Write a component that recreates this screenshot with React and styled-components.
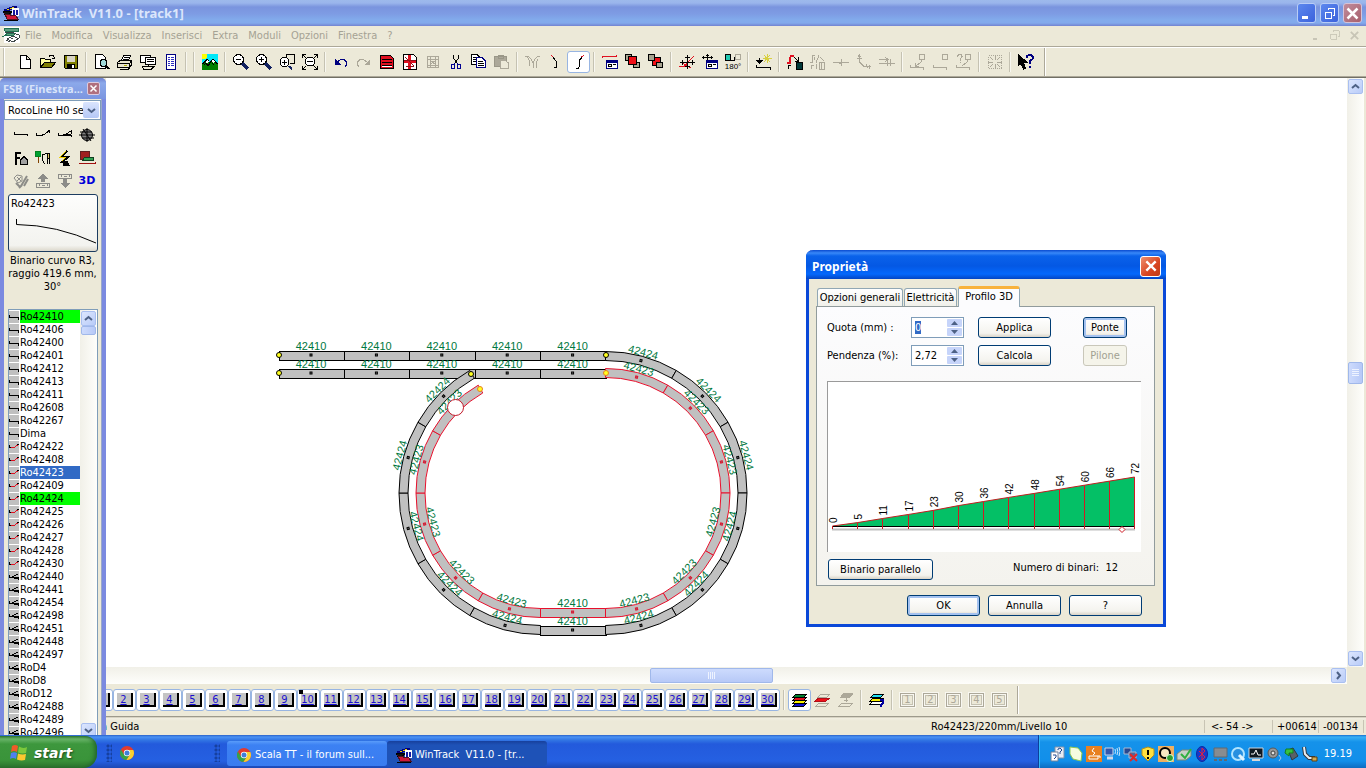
import React, { useEffect, useRef, useState } from 'react';
import styled, { createGlobalStyle } from 'styled-components';

const GlobalStyle = createGlobalStyle`
  * {
    box-sizing: border-box;
  }
  html, body, #root {
    height: 100%;
  }
  body {
    margin: 0;
    overflow: hidden;
    background: #ece9d8;
  }
  body, button, input, select {
    font-family: 'DejaVu Sans Condensed', 'Noto Sans', sans-serif;
    font-size: 11px;
    line-height: 13px;
    color: #000;
  }
  button {
    padding: 0;
    cursor: default;
  }
  svg {
    display: block;
    flex: none;
  }
`;

const AppStyle = styled.div`
  display: flex;
  flex-direction: column;
  height: 100vh;
`;

/* ---- title and menu ---- */
const TitleBar = styled.header`
  display: flex;
  align-items: center;
  height: 26px;
  padding: 0 4px 0 3px;
  gap: 3px;
  background: linear-gradient(#9db9eb 0, #9ab5ec 3px, #7a94de 7px, #7e9ce4 14px, #82abec 20px, #82a9ec 23px, #7283d0 26px);
`;
const TitleText = styled.h1`
  flex: 1;
  margin: 0;
  font-family: 'Noto Sans', 'Open Sans', sans-serif;
  font-size: 13px;
  font-weight: 700;
  white-space: pre;
  color: #dbe6fb;
`;
const WindowButtons = styled.div`
  display: flex;
  gap: 4px;
`;
const WindowButton = styled.button`
  display: grid;
  place-items: center;
  width: 19px;
  height: 20px;
  border: 1px solid ${(props) => (props.$close ? '#d5c3d8' : '#b9cdf6')};
  border-radius: 3px;
  background: ${(props) => (props.$close ? 'linear-gradient(135deg, #c08c9c, #a8606c)' : 'linear-gradient(135deg, #5c88ee, #3c62dc)')};
`;
const MenuBar = styled.nav`
  display: flex;
  align-items: center;
  height: 20px;
  padding: 0 4px 2px;
  background: #ece9d8;
`;
const MenuList = styled.div`
  display: flex;
  flex: 1;
  gap: 10px;
  padding-left: 5px;
`;
const MenuItem = styled.button`
  border: 0;
  background: none;
  color: #a5a294;
`;
const MdiButtons = styled.div`
  display: flex;
  gap: 3px;
`;
const MdiButton = styled.button`
  display: grid;
  place-items: center;
  width: 16px;
  height: 14px;
  border: 0;
  background: none;
`;

/* ---- toolbars ---- */
const ToolBar = styled.div`
  display: flex;
  align-items: center;
  height: 32px;
  border-top: 1px solid #aca899;
  border-bottom: 1px solid #716f64;
  box-shadow: inset 0 1px 0 #fff, inset 0 -1px 0 #aca899;
  background: #ece9d8;
`;
const ToolGroup = styled.div`
  display: flex;
  align-items: center;
  height: 28px;
  padding: 0 7px 0 8px;
  margin-left: 4px;
  border-left: 1px solid #fff;
  border-right: 1px solid #aca899;
  box-shadow: 1px 0 0 #fff, -1px 0 0 #c5c2b2;
`;
const ToolButton = styled.button`
  display: grid;
  place-items: center;
  width: 23px;
  height: 22px;
  border: 1px solid ${(props) => (props.$pressed ? '#98b5e2' : 'transparent')};
  border-radius: 3px;
  background: ${(props) => (props.$pressed ? '#fff' : 'none')};
`;
const Separator = styled.span`
  width: 8px;
  height: 20px;
  border-left: 3px solid transparent;
  background: linear-gradient(90deg, #c5c2b2 1px, #f8f7f0 1px, #f8f7f0 2px, transparent 2px) content-box;
`;

/* ---- palette on the left ---- */
const Body = styled.div`
  display: flex;
  flex: 1;
  min-height: 0;
`;
const Palette = styled.aside`
  display: flex;
  flex-direction: column;
  width: 106px;
  overflow: hidden;
  padding: 0 4px;
  border-radius: 5px 5px 0 0;
  background: #7b8ae0;
`;
const PaletteTitle = styled.div`
  display: flex;
  align-items: center;
  justify-content: space-between;
  height: 21px;
  margin: 0 -4px;
  padding: 0 6px 0 3px;
  font-family: 'Noto Sans', 'Open Sans', sans-serif;
  font-weight: 700;
  color: #d9e4fa;
  background: linear-gradient(#6f80d0, #8ca9ea 5px, #7b95e0);
`;
const PaletteClose = styled.button`
  display: grid;
  place-items: center;
  width: 13px;
  height: 13px;
  border: 1px solid #dccbe0;
  border-radius: 2px;
  background: #b0707e;
`;
const PaletteBody = styled.div`
  display: flex;
  flex-direction: column;
  flex: 1;
  min-height: 0;
  padding: 1px 0 0;
  background: #ece9d8;
  border-right: 1px solid #9aa8c8;
`;
const Combo = styled.label`
  display: flex;
  height: 20px;
  padding: 1px;
  border: 1px solid #7f9db9;
  background: #fff;
`;
const ComboSelect = styled.select`
  appearance: none;
  flex: 1;
  width: 0;
  padding: 0 0 0 2px;
  border: 0;
  border-radius: 0;
  background: #fff;
  overflow: hidden;
  outline: none;
`;
const ComboArrow = styled.span`
  display: grid;
  place-items: center;
  width: 16px;
  border-radius: 2px;
  background: linear-gradient(#dae4fd, #b5c8f6);
`;
const PaletteTools = styled.div`
  display: grid;
  grid-template-columns: repeat(4, 22px);
  grid-auto-rows: 23px;
  padding: 3px 0 0 6px;
`;
const PaletteTool = styled.button`
  display: grid;
  place-items: center;
  border: 0;
  background: none;
`;
const Label3D = styled.span`
  font-family: 'DejaVu Sans', sans-serif;
  font-size: 11px;
  font-weight: 700;
  color: #0000d8;
`;
const Preview = styled.button`
  height: 58px;
  margin: 2px 3px 0 4px;
  border: 1px solid #1c3c60;
  border-radius: 3px;
  text-align: left;
  background: linear-gradient(#fdfdfc, #f3f3ef 90%, #dcd8cc);
`;
const PreviewName = styled.span`
  display: block;
  padding-left: 2px;
`;
const Description = styled.p`
  height: 55px;
  margin: 2px 2px 0;
  text-align: center;
`;
const ListBox = styled.div`
  display: flex;
  flex: 1;
  min-height: 0;
  margin: 0 3px -5px 4px;
  border: 1px solid #7f9db9;
  background: #fff;
`;
const TrackList = styled.ul`
  flex: 1;
  margin: 0;
  padding: 0;
  overflow: hidden;
  list-style: none;
`;
const TrackItem = styled.li`
  display: flex;
  align-items: center;
  gap: 1px;
  height: 13px;
`;
const TrackName = styled.span`
  flex: 1;
  color: ${(props) => (props.$selected ? '#fff' : '#000')};
  background: ${(props) => (props.$selected ? '#316ac5' : props.$used ? '#00ff00' : 'none')};
`;

/* ---- scroll bars ---- */
const ScrollBar = styled.div`
  display: flex;
  flex-direction: ${(props) => (props.$vertical ? 'column' : 'row')};
  ${(props) => (props.$vertical ? 'width: 17px;' : 'height: 17px; flex: 1;')}
  padding: 1px;
  background: linear-gradient(${(props) => (props.$vertical ? '90deg' : '180deg')}, #f1f0e8, #fefefb);
`;
const ScrollButton = styled.button`
  display: grid;
  place-items: center;
  flex: none;
  width: 15px;
  height: 15px;
  border: 1px solid #a9bff0;
  border-radius: 2px;
  background: linear-gradient(135deg, #dce6fe, #b9ccf8);
`;
const ScrollSpace = styled.span`
  flex: ${(props) => props.$grow};
`;
const ScrollThumb = styled.span`
  display: grid;
  place-items: center;
  flex: none;
  ${(props) => (props.$vertical ? `height: ${props.$size}px;` : `width: ${props.$size}px;`)}
  border: 1px solid #a0b8ea;
  border-radius: 2px;
  background: linear-gradient(${(props) => (props.$vertical ? '90deg' : '180deg')}, #cddbfd, #b7c9f7);
`;

/* ---- drawing area ---- */
const Main = styled.main`
  display: flex;
  flex-direction: column;
  flex: 1;
  min-width: 0;
  overflow: hidden;
`;
const PlanRow = styled.div`
  display: flex;
  flex: 1;
  min-height: 0;
  padding-right: 2px;
`;
const Plan = styled.div`
  position: relative;
  flex: 1;
  min-width: 0;
  overflow: hidden;
  background: #fff;
`;
const HorizontalRow = styled.div`
  display: flex;
  padding-right: 19px;
`;
const LevelBar = styled.div`
  display: flex;
  align-items: center;
  height: 32px;
  margin-left: -16px;
  background: #ece9d8;
`;
const LevelTools = styled.div`
  display: flex;
  align-items: center;
  height: 28px;
  padding-right: 6px;
  border-right: 1px solid #aca899;
  box-shadow: 1px 0 0 #fff;
`;
const LevelButton = styled.button`
  display: grid;
  place-items: center;
  width: 23px;
  height: 22px;
  border: 1px solid #98b5e2;
  border-radius: 3px;
  background: #fff;
`;
const LevelFace = styled.span`
  position: relative;
  width: 16px;
  height: 14px;
  border: solid #000;
  border-width: 0 2px 2px 0;
  text-align: center;
  text-decoration: underline;
  color: #1a10d0;
  background: #c4c4c4;
`;
const ActiveMark = styled.i`
  position: absolute;
  left: -2px;
  top: -3px;
  width: 4px;
  height: 4px;
  background: #000;
`;
const GroupFace = styled.span`
  width: 15px;
  height: 14px;
  border: 1px solid #aca899;
  outline: 1px solid #f8f7f0;
  box-shadow: inset 0 0 0 1px #f8f7f0, inset 0 0 0 2px #c5c2b2;
  line-height: 12px;
  text-align: center;
  color: #aca899;
`;
const StatusBar = styled.footer`
  display: flex;
  align-items: center;
  height: 19px;
  padding-right: 2px;
  border-top: 1px solid #9d9a8c;
  box-shadow: inset 0 1px 0 #d8d4c4;
  background: linear-gradient(#f3f1e6, #ece9d8 4px);
`;
const StatusText = styled.span`
  flex: 1;
  margin-left: -5px;
`;
const StatusCell = styled.span`
  width: ${(props) => props.$width}px;
  padding-left: ${(props) => props.$indent || 4}px;
  border-right: 1px solid #c8c4b4;
  white-space: nowrap;
`;

/* ---- dialog ---- */
const Dialog = styled.section`
  position: absolute;
  left: 700px;
  top: 172px;
  width: 360px;
  border: solid #0a48d8;
  border-width: 0 3px 3px;
  border-radius: 7px 7px 0 0;
  background: #ece9d8;
`;
const DialogTitle = styled.div`
  display: flex;
  align-items: center;
  justify-content: space-between;
  height: 29px;
  margin: 0 -3px;
  padding: 3px 5px 0 6px;
  border-radius: 7px 7px 0 0;
  background: linear-gradient(#0a4ad0 0, #3888f8 3px, #0a62ea 6px, #0458e4 16px, #0468fc 24px, #0345c4 29px);
`;
const DialogCaption = styled.h2`
  margin: 0;
  font-family: 'Noto Sans', 'Open Sans', sans-serif;
  font-size: 12px;
  font-weight: 700;
  color: #fff;
`;
const DialogClose = styled.button`
  display: grid;
  place-items: center;
  width: 21px;
  height: 21px;
  border: 1px solid #fff;
  border-radius: 3px;
  background: linear-gradient(135deg, #ee9070, #d84420 60%, #c03c18);
`;
const DialogBody = styled.div`
  padding: 7px 8px 8px 7px;
`;
const Tabs = styled.div`
  display: flex;
  align-items: flex-end;
  gap: 1px;
  height: 20px;
  padding-left: 1px;
`;
const Tab = styled.button`
  height: ${(props) => (props.$active ? 21 : 18)}px;
  width: ${(props) => props.$width}px;
  padding-bottom: ${(props) => (props.$active ? 3 : 0)}px;
  margin-bottom: ${(props) => (props.$active ? -1 : 0)}px;
  z-index: ${(props) => (props.$active ? 1 : 0)};
  border: 1px solid #91a7b4;
  border-bottom: 0;
  border-top: ${(props) => (props.$active ? '3px solid #f8b23c' : '1px solid #91a7b4')};
  border-radius: 3px 3px 0 0;
  white-space: nowrap;
  background: ${(props) => (props.$active ? '#fcfcfe' : 'linear-gradient(#fff, #f0f0ea)')};
`;
const TabPanel = styled.div`
  padding: 10px 13px 5px 10px;
  border: 1px solid #919b9c;
  background: linear-gradient(#fcfcfe, #f4f3ee);
`;
const Fields = styled.div`
  display: grid;
  grid-template-columns: 84px 53px 14px 73px 32px 44px;
  row-gap: 7px;
  align-items: center;
`;
const Spinner = styled.span`
  display: flex;
  height: 21px;
  padding: 1px;
  border: 1px solid #7f9db9;
  background: #fff;
`;
const SpinnerInput = styled.input`
  flex: 1;
  width: 0;
  padding: 0 0 1px 2px;
  border: 0;
  outline: none;
  &::selection {
    color: #fff;
    background: #316ac5;
  }
`;
const SpinnerButtons = styled.span`
  display: flex;
  flex-direction: column;
  gap: 1px;
  width: 15px;
`;
const SpinnerButton = styled.button`
  display: grid;
  place-items: center;
  flex: 1;
  border: 0;
  border-radius: 1px;
  background: #c6d4fa;
`;
const PushButton = styled.button`
  grid-column: ${(props) => props.$column || 'auto'};
  width: ${(props) => props.$width}px;
  height: 21px;
  border: 1px solid ${(props) => (props.disabled ? '#c9c7ba' : '#003c74')};
  border-radius: 3px;
  color: ${(props) => (props.disabled ? '#a1a192' : '#000')};
  background: ${(props) => (props.disabled ? '#f5f4ea' : 'linear-gradient(#fff, #f4f3ee 80%, #d9d3c7)')};
  box-shadow: ${(props) => (props.$focused ? 'inset 0 0 0 2px #a4c2f0' : 'none')};
`;
const ChartBox = styled.div`
  margin: 15px 0 7px;
  border: solid #9a9a9a;
  border-width: 1px 0 0 1px;
  background: #fff;
`;
const PanelFooter = styled.div`
  display: flex;
  justify-content: space-between;
  padding: 0 23px 0 1px;
`;
const Count = styled.span`
  white-space: pre;
  line-height: 17px;
`;
const DialogButtons = styled.div`
  display: flex;
  justify-content: flex-end;
  gap: 8px;
  padding: 9px 13px 0 0;
`;

/* ---- task bar ---- */
const TaskBar = styled.footer`
  display: flex;
  align-items: stretch;
  height: 33px;
  background: linear-gradient(#2a62c8 0, #4a92f4 2px, #3276e4 5px, #235adc 9px, #2560e2 26px, #1d48b4 33px);
`;
const StartButton = styled.button`
  display: flex;
  align-items: center;
  gap: 6px;
  width: 97px;
  margin-top: 1px;
  padding: 2px 0 0 10px;
  border: 0;
  border-radius: 0 12px 14px 0;
  font-family: 'DejaVu Sans', sans-serif;
  font-size: 14px;
  line-height: 20px;
  font-weight: 700;
  font-style: italic;
  color: #fff;
  text-shadow: 1px 1px 2px #1c4a1c;
  background: linear-gradient(#2f7a30 0, #68b468 3px, #3d973d 8px, #3a943a 24px, #2a702c 32px);
  box-shadow: inset -4px 0 5px -2px #20602a;
`;
const Grip = styled.span`
  width: 6px;
  margin: 9px 7px 6px 9px;
  background: radial-gradient(circle at 2px 2px, #1640a0 1px, transparent 2px) 0 0 / 4px 4px;
`;
const QuickLaunch = styled.div`
  display: flex;
  align-items: center;
  width: 86px;
  padding-top: 3px;
`;
const TaskButton = styled.button`
  display: flex;
  align-items: center;
  gap: 3px;
  width: 160px;
  margin: 6px 0 2px;
  padding: 2px 9px 0;
  border: 0;
  border-radius: 3px;
  white-space: pre;
  color: #fff;
  background: ${(props) => (props.$active ? 'linear-gradient(#17409c, #1e52b7 4px)' : 'linear-gradient(#5a9cfa, #3c81f3 4px, #3a7cf0)')};
`;
const Tray = styled.div`
  display: flex;
  align-items: center;
  gap: 2px;
  margin-left: auto;
  padding: 4px 14px 0 11px;
  border-left: 1px solid #0c3f9c;
  background: linear-gradient(#1670d0 0, #38b0f4 2px, #1592ea 7px, #118fea 26px, #0e6cc0 33px);
  box-shadow: inset 1px 0 0 #32b8f8;
`;
const Clock = styled.time`
  margin-left: 4px;
  color: #fff;
`;

const Svg = ({ children, size = 16 }) => (
  <svg width={size} height={size} viewBox="0 0 16 16" fill="none" stroke="#000" shapeRendering="crispEdges" overflow="visible" aria-hidden="true">
    {children}
  </svg>
);

const Cross = ({ color = '#fff', size = 12, weight = 2 }) => (
  <svg width={size} height={size} viewBox="0 0 12 12" stroke={color} strokeWidth={weight}>
    <path d="M2 2L10 10M10 2L2 10" />
  </svg>
);

const turns = { down: 0, up: 180, left: 90, right: 270 };
const Chevron = ({ to = 'down' }) => (
  <svg width="9" height="9" viewBox="0 0 9 9" fill="none" stroke="#4d6185" strokeWidth="2">
    <path d="M1 3L4.500 6L8 3" transform={`rotate(${turns[to]} 4.500 4.500)`} />
  </svg>
);

const GREY = '#aca899';
const tools = {
  new: <path d="M3.500 1.500H9.500L13.500 5.500V14.500H3.500ZM9.500 1.500V5.500H13.500" fill="#fff" />,
  open: (
    <>
      <path d="M0.500 13.500V4.500H4.500L5.500 5.500H10.500V7.500" fill="#ffffa0" />
      <path d="M0.500 13.500L4.500 8.500H15.500L11.500 13.500Z" fill="#808000" />
      <path d="M9 2.500L10 1.500H13L14.500 4M12 4.500H15" />
    </>
  ),
  save: (
    <>
      <path d="M1.500 1.500H14.500V14.500H2.500L1.500 13.500Z" fill="#808000" />
      <path d="M4 2H12V8H4Z" fill="#d8d4c4" stroke="none" />
      <path d="M4 10H12V15H4Z" fill="#000" stroke="none" />
      <path d="M9 11H11V14H9Z" fill="#fff" stroke="none" />
    </>
  ),
  preview: (
    <>
      <path d="M1.500 0.500H8.500L11.500 3.500V14.500H1.500Z" fill="#fff" />
      <circle cx="9.500" cy="9" r="3.500" fill="#9fd8d8" />
      <path d="M12 12L15.500 15" strokeWidth="2" />
    </>
  ),
  print: (
    <>
      <path d="M4.500 6.500L6.500 1.500H13.500L11.500 6.500" fill="#fff" />
      <path d="M0.500 8.500L3 6.500H14.500V11L12 13.500H0.500Z" fill="#e8e4d0" />
      <path d="M1 9.500H12.500L14.500 7M12.500 9.500V13M3 15.500H11L13 13.500M7 3.500H12M6 5.500H11" />
      <path d="M7 11.500H10" stroke="#b0b000" />
    </>
  ),
  pages: (
    <>
      <path d="M4.500 8.500H0.500V1.500H10.500V3" fill="#fff" />
      <path d="M5.500 3.500H15.500V10.500H5.500Z" fill="#fff" />
      <path d="M2 12.500H14L11 15.500H4L2 12.500M8.500 10.500V12.500M7 5.500H14M7 7.500H14" />
    </>
  ),
  report: (
    <>
      <path d="M3.500 0.500H12.500V15.500H3.500Z" fill="#fff" stroke="#000080" />
      <path d="M5 3.500H7M8 3.500H11M5 5.500H7M8 5.500H11M5 7.500H7M8 7.500H11M5 9.500H7M8 9.500H11M5 11.500H7M8 11.500H11" stroke="#3030c0" />
    </>
  ),
  picture: (
    <>
      <path d="M0 0H16V16H0Z" fill="#00e8f8" stroke="none" />
      <path d="M0 0H5V3L3 5H0Z" fill="#ffff00" stroke="none" />
      <path d="M0 10L5 5L8 9L11 5L16 10V16H0Z" fill="#008000" stroke="none" />
      <path d="M0.500 10L5 5.500L8 9L11 5L15.500 10M2 11L4 9L6 12L8 9M10 9L12 11" />
      <path d="M3 8L5 6L7 8L5 9ZM9 7L11 5L13 8L11 9Z" fill="#fff" stroke="none" />
    </>
  ),
  zoomOut: (
    <>
      <circle cx="5.500" cy="5.500" r="5" fill="#fff" />
      <path d="M3 5.500H8" />
      <path d="M9.500 9.500L15 15" stroke="#102060" strokeWidth="3" />
    </>
  ),
  zoomIn: (
    <>
      <circle cx="5.500" cy="5.500" r="5" fill="#fff" />
      <path d="M3 5.500H8M5.500 3V8" />
      <path d="M9.500 9.500L15 15" stroke="#102060" strokeWidth="3" />
    </>
  ),
  zoomWindow: (
    <>
      <path d="M7.500 3V0.500H15.500V9.500H11" />
      <circle cx="5.500" cy="8" r="4.500" fill="#fff" />
      <path d="M3 8.500H8M5.500 6V11" />
      <path d="M9.500 12L13 15" stroke="#102060" strokeWidth="2" />
    </>
  ),
  zoomAll: (
    <>
      <path d="M0.500 4V0.500H4M12 0.500H15.500V4M0.500 12V15.500H4M12 15.500H15.500V12M1 1L4 4M15 1L12 4M1 15L4 12M11 11L15 15" />
      <circle cx="8" cy="7.500" r="4.500" fill="#fff" />
      <path d="M5 7.500H11" />
    </>
  ),
  undo: (
    <>
      <path d="M3 9L6 6.500L8 5.500H11L13.500 8V11L12 12.500" stroke="#000080" />
      <path d="M2 5V11H8Z" fill="#000080" stroke="none" />
    </>
  ),
  redo: (
    <>
      <path d="M12 9L9 6.500L7 5.500H4L1.500 8V11L3 12.500" stroke={GREY} />
      <path d="M14 5V11H8Z" fill={GREY} stroke="none" />
    </>
  ),
  redDoc: (
    <>
      <path d="M1.500 1.500H11.500L14.500 4.500V14.500H1.500Z" fill="#e01020" />
      <path d="M3 5.500H13M3 8.500H13M3 11.500H13" />
      <path d="M3 12.500H13" stroke="#fff" />
    </>
  ),
  redCross: (
    <>
      <path d="M1.500 0.500H11.500L14.500 3.500V15.500H1.500Z" fill="#fff" />
      <path d="M2 6H14V9H2ZM6 1H9V15H6Z" fill="#e01020" stroke="none" />
      <path d="M2 6.500H14M4 12.500H12M3 3L12 12" stroke="#901018" />
    </>
  ),
  greyDoc: <path d="M2.500 2.500H13.500V13.500H2.500ZM2 5.500H14M2 11.500H14M5.500 3V13M10.500 3V13M6 7L10 10M10 7L6 10" stroke={GREY} />,
  cut: (
    <>
      <path d="M5.500 1V4L9.500 10M10.500 1V4L6.500 10" />
      <path d="M3.500 10.500H6.500V14.500H3.500ZM9.500 10.500H12.500V14.500H9.500ZM6 10L7 9M10 10L9 9" stroke="#000090" />
    </>
  ),
  copy: (
    <>
      <path d="M0.500 0.500H6L9.500 4V10.500H0.500Z" fill="#fff" />
      <path d="M5.500 3.500H11L14.500 7V13.500H5.500Z" fill="#fff" stroke="#000080" />
      <path d="M2 3.500H5M2 5.500H5M2 7.500H5M7 7.500H12M7 9.500H13M7 11.500H13" />
    </>
  ),
  paste: (
    <>
      <path d="M0.500 2.500H12.500V12.500H0.500ZM4 1H9V4H4Z" fill={GREY} stroke="#9a9788" />
      <path d="M6.500 6.500H11.500L14.500 9V14.500H6.500Z" fill="#ece9d8" stroke={GREY} />
    </>
  ),
  branchGrey: <path d="M0 2.500H2L4 6V12M3 2L6 5L8 9V14M12 2H15M13 2L10 5L8 9M13 5L11 9V14" stroke={GREY} />,
  bend: (
    <>
      <path d="M5 3L6.500 5L8.500 8V13.500H6" />
      <path d="M3 1.500L5 2.500" stroke="#e01020" />
    </>
  ),
  curve: (
    <>
      <path d="M5 14.500H7.500L8.500 11V6L11 3.500" />
      <path d="M10.500 2.500L13.500 1.500" stroke="#e01020" />
    </>
  ),
  ruler: (
    <>
      <path d="M0.500 4V2.500H14.500V1" stroke="#e01020" />
      <path d="M4.500 6.500H15.500V14.500H4.500Z" fill="#fff" stroke="#000080" />
      <path d="M4 7.500H16" strokeWidth="2" stroke="#000080" />
      <path d="M6.500 10.500H9.500V12.500H6.500ZM11 10.500H14" />
    </>
  ),
  bringFront: (
    <>
      <path d="M0.500 0.500H6.500V6.500H0.500ZM8.500 8.500H14.500V13.500H8.500Z" fill="#a8a490" />
      <path d="M3.500 2.500H11.500V10.500H3.500Z" fill="#f01018" />
    </>
  ),
  sendBack: (
    <>
      <path d="M4.500 3.500H12.500V11.500H4.500Z" fill="#f01018" />
      <path d="M0.500 0.500H6.500V6.500H0.500ZM8.500 8.500H14.500V13.500H8.500Z" fill="#a8a490" />
    </>
  ),
  move: (
    <>
      <path d="M0 12.500H5L15 2M1 8L12 14" stroke="#e01020" />
      <path d="M8.500 1V15M1 8.500H16M6 3.500H11M6 12.500H11M3.500 6V11M13.500 6V11" />
    </>
  ),
  moveWindow: (
    <>
      <path d="M5.500 0V8M0 3.500H11M4 1.500H7M1.500 2V5M9.500 2V5" />
      <path d="M4.500 6.500H15.500V14.500H4.500Z" fill="#fff" stroke="#000080" />
      <path d="M4 7.500H16" strokeWidth="2" stroke="#000080" />
      <path d="M6.500 10.500H9.500V12.500H6.500ZM11 10.500H14" />
    </>
  ),
  rotate: (
    <>
      <path d="M0.500 0.500H5.500V6.500H0.500Z" fill="#20c8b0" />
      <path d="M6 6.500H9V3" />
      <path d="M10.500 0.500H15.500V5.500H10.500Z" stroke={GREY} />
      <text x="8" y="15" textAnchor="middle" fontSize="8" fontFamily="Liberation Sans, sans-serif" fill="#000" stroke="none">180°</text>
    </>
  ),
  levelNew: (
    <>
      <path d="M0 6H7L3.500 10Z" fill="#000" stroke="none" />
      <path d="M3.500 4V7M0.500 11V13.500H14.500V16" />
      <path d="M11 0V9M7 4.500H16M8 1L14 8M14 1L8 8" stroke="#d8d040" />
    </>
  ),
  slope: (
    <>
      <path d="M0 8.500H2.500V5L4.500 1.500H7" stroke="#e01020" strokeWidth="2" />
      <path d="M1.500 15V11.500H4M7 3L11 7M11.500 3V7.500H8" />
      <path d="M9 8H15V15H9Z" fill="#003838" />
    </>
  ),
  slopeGrey: <path d="M0 8.500H2.500V1.500H5M4 6V3M6 8.500L9 1.500M10 3L14 7M1.500 15V11.500H4M6.500 15V10M9 8H14V15H9ZM11.500 8V15" stroke={GREY} />,
  joint: <path d="M0 8.500H16M8.500 5V12M6 8.500L8 10" stroke={GREY} />,
  arcGrey: <path d="M1 4.500H6M3.500 1V8L8 12.500H15M2 3L3.500 1L5 3M10 10L12 14M13 11V15" stroke={GREY} />,
  mergeGrey: <path d="M0 5.500H8M0 9.500H16M6 3L9 5.500L6 8M11.500 5V12M8 7V12" stroke={GREY} />,
  slopeA: <path d="M9.500 0.500H14.500V5.500H9.500ZM11 6V8L6 12M0.500 11V13.500H13.500V16M5.500 9V12.500H9" stroke={GREY} />,
  slopeB: <path d="M9.500 0.500H14.500V5.500H9.500ZM0.500 11V13.500H13.500V16" stroke={GREY} />,
  slopeC: <path d="M9.500 0.500H14.500V5.500H9.500ZM11 6V8L6 12M0.500 11V13.500H13.500V16M1 2.500L3 0.500H5L6 2.500L4 5V7M4 8V9" stroke={GREY} />,
  burst: (
    <g stroke={GREY}>
      <path d="M1.500 1.500H14.500V14.500H1.500Z" strokeDasharray="1 1" />
      <path d="M8.500 1V6M8.500 10V15M1 8.500H6M10 8.500H15M3 3L6 6M13 3L10 6M3 13L6 10M13 13L10 10" />
    </g>
  ),
  help: (
    <>
      <path d="M0 0V12L3 9.500L5.500 15L7.500 14L5.500 8.500H9Z" fill="#000" />
      <path d="M9 4V2L11 1H13L15 3L14.500 5L12 7V10M12 12V14" stroke="#000080" strokeWidth="2" />
    </>
  ),
};

const toolBar = [
  'new', 'open', 'save', '|', 'preview', 'print', 'pages', 'report', '|', '|', 'picture', '|',
  'zoomOut', 'zoomIn', 'zoomWindow', 'zoomAll', '|', 'undo', 'redo', 'redDoc', 'redCross', 'greyDoc', 'cut', 'copy', 'paste', '|',
  'branchGrey', 'bend', 'curve', '|', 'ruler', 'bringFront', 'sendBack', '|', 'move', 'moveWindow', 'rotate', '|', 'levelNew', '|',
  'slope', 'slopeGrey', 'joint', 'arcGrey', 'mergeGrey', '|', 'slopeA', 'slopeB', 'slopeC', '|', 'burst', '|', 'help',
];

const paletteTools = [
  <path d="M1.500 5V7.500H14.500V9" />,
  <path d="M1.500 6V8.500H6L9 7.500L12 5.500L14.500 3M13 3L15 6" />,
  <path d="M1.500 6V8.500H14.500V10M5 8.500L9 7L14 4V7M8 7.500H14" />,
  <g shapeRendering="auto">
    <circle cx="8" cy="8" r="5.500" fill="#808080" />
    <path d="M0 8H16M1 5H13M3 11H15M4 2L12 14M8 1V15" />
  </g>,
  <>
    <path d="M2.500 15V2.500H8M2 7.500H7" strokeWidth="2" />
    <path d="M7.500 14.500V10L11 6.500L14.500 10V14.500Z" fill="#a0a0a0" />
  </>,
  <>
    <circle cx="3" cy="4" r="3" fill="#00a030" stroke="#008020" />
    <path d="M3.500 7V13" stroke="#804000" />
    <path d="M7.500 5V10L9.500 14M7.500 5L11 3.500L14.500 5V14M12.500 9V14" />
    <path d="M12.500 3.500H14.500V8.500H12.500Z" fill="#d8c060" />
  </>,
  <>
    <path d="M10 1L4 7H11L5 12H8" strokeWidth="2" />
    <path d="M9 1L3 7H9L5 11" stroke="#f0d000" />
    <path d="M6 11V15H12L10 11" fill="#000" />
  </>,
  <>
    <path d="M1.500 1.500H10.500V9.500H1.500Z" fill="#a02020" stroke="#602020" />
    <path d="M5.500 7.500H14.500V10.500H3.500Z" fill="#30a050" stroke="#104020" />
    <path d="M0 13.500H16V12" stroke="#a01010" />
  </>,
  <g stroke="#8c8c88" shapeRendering="auto">
    <path d="M1 5L4 2L9 3V8L5 10ZM4 4L8 8M4 8L8 4" />
    <path d="M8 13L14 3M6 15L9 12M11 13L15 6M3 10L7 14" strokeWidth="2" />
  </g>,
  <>
    <path d="M8 0L3 6H6V9H10V6H13Z" fill="#8c8c88" stroke="none" />
    <path d="M1.500 10.500H14.500V14.500H1.500ZM4.500 11V13M7 12.500H10M12.500 11V13" stroke="#8c8c88" />
  </>,
  <>
    <path d="M1.500 1.500H14.500V5.500H1.500ZM4.500 2V4M7 3.500H10M12.500 2V4" stroke="#8c8c88" />
    <path d="M8 15L3 10H6V6H10V10H13Z" fill="#8c8c88" stroke="none" />
  </>,
];

const Logo = () => (
  <Svg>
    <path d="M1 5L12 1L14 2L4 6Z" fill="#f0d000" stroke="#000080" />
    <path d="M0 6H9L6 10H2Z" fill="#101010" />
    <path d="M9 3H16V11H9Z" fill="#fff" stroke="none" />
    <path d="M10.500 5V10M13.500 5V10" stroke="#1818a0" strokeWidth="2" />
    <path d="M2 9L13 11L15 14H4Z" fill="#d01838" stroke="#501020" />
    <path d="M1 15.500H15" />
  </Svg>
);

const Chrome = () => (
  <svg width="16" height="16" viewBox="0 0 16 16">
    <circle cx="8" cy="8" r="7" fill="#e33b2e" />
    <path d="M1.900 4.500A7 7 0 0 0 7.500 15L10.500 10L5 9.500Z" fill="#35a24a" />
    <path d="M14.300 5A7 7 0 0 1 7.500 15L11 9.500L9 5Z" fill="#f8d030" />
    <circle cx="8" cy="8" r="3.200" fill="#fff" />
    <circle cx="8" cy="8" r="2.500" fill="#3f7fd8" />
  </svg>
);

const names = [
  'Ro42410', 'Ro42406', 'Ro42400', 'Ro42401', 'Ro42412', 'Ro42413', 'Ro42411', 'Ro42608', 'Ro42267', 'Dima', 'Ro42422',
  'Ro42408', 'Ro42423', 'Ro42409', 'Ro42424', 'Ro42425', 'Ro42426', 'Ro42427', 'Ro42428', 'Ro42430', 'Ro42440', 'Ro42441',
  'Ro42454', 'Ro42498', 'Ro42451', 'Ro42448', 'Ro42497', 'RoD4', 'RoD8', 'RoD12', 'Ro42488', 'Ro42489', 'Ro42496',
];

// straight pieces first, then curves, then points
const TrackIcon = ({ index }) => (
  <svg width="10" height="12" viewBox="0 0 10 12" fill="none" stroke="#000" shapeRendering="crispEdges">
    <path d="M0 0H10V12H0Z" fill="#c0c0c0" stroke="none" />
    {index < 10 && <path d="M0.500 4V6.500H9.500V9" />}
    {index >= 10 && index < 20 && (
      <>
        <path d="M0.500 4V6.500H2M8 3.500H10" />
        <path d="M2 6.500H5L8.500 4" stroke="#e01020" />
      </>
    )}
    {index >= 20 && <path d="M0.500 4V6.500H9.500V9M3 6L9 3M5 7.500H9" />}
  </svg>
);

/* ---- track plan ---- */
const CY = 415;
const RIGHT_X = 499.5;
const LEFT_X = 434.5;
const OUTER = 137;
const INNER = 120;
const HALF = 4.5;

const point = (cx, r, angle) => {
  const a = (angle * Math.PI) / 180;
  return [cx + r * Math.sin(a), CY - r * Math.cos(a)];
};

const Piece = ({ label, x, y, angle, color }) => {
  const turn = angle > 90 && angle < 270 ? angle - 180 : angle;
  return (
    <g transform={`translate(${x} ${y}) rotate(${turn})`}>
      <rect x="-1" y="-1" width="2" height="2" fill="#777" stroke={color} />
      <text y="-5" textAnchor="middle" fontSize="11" fontFamily="Liberation Sans, sans-serif" fill="#007840">
        {label}
      </text>
    </g>
  );
};

const Curve = ({ cx, r, start, color }) => {
  const [x1, y1] = point(cx, r + HALF, start);
  const [x2, y2] = point(cx, r + HALF, start + 30);
  const [x3, y3] = point(cx, r - HALF, start + 30);
  const [x4, y4] = point(cx, r - HALF, start);
  return (
    <path
      d={`M${x1} ${y1}A${r + HALF} ${r + HALF} 0 0 1 ${x2} ${y2}L${x3} ${y3}A${r - HALF} ${r - HALF} 0 0 0 ${x4} ${y4}Z`}
      fill="#c0c0c0"
      stroke={color}
    />
  );
};

const straights = [
  ...[0, 1, 2, 3, 4].map((i) => ({ x: 173 + i * 65.4, y: 277, color: '#000' })),
  ...[0, 1, 2, 3, 4].map((i) => ({ x: 173 + i * 65.4, y: 295, color: '#000' })),
  { x: 434.6, y: 552, color: '#000' },
  { x: 434.6, y: 534, color: '#e8102c' },
];
const curves = [
  ...[0, 30, 60, 90, 120, 150].map((start) => ({ cx: RIGHT_X, start })),
  ...[180, 210, 240, 270, 300].map((start) => ({ cx: LEFT_X, start })),
];
const arcs = [
  ...curves.map((c) => ({ ...c, r: OUTER, label: '42424', color: '#000' })),
  ...curves.map((c) => ({ ...c, r: INNER, label: '42423', color: '#e8102c' })),
];

const TrackPlan = () => (
  <svg width="100%" height="100%">
    {straights.map((s, i) => (
      <rect key={i} x={s.x} y={s.y - 4} width="65.400" height="9" fill="#c0c0c0" stroke={s.color} shapeRendering="crispEdges" />
    ))}
    {arcs.map((a, i) => (
      <Curve key={i} {...a} />
    ))}
    {straights.map((s, i) => (
      <Piece key={i} label="42410" x={s.x + 32} y={s.y} angle={0} color={s.color} />
    ))}
    {arcs.map((a, i) => {
      const [x, y] = point(a.cx, a.r, a.start + 15);
      return <Piece key={i} label={a.label} x={x} y={y} angle={a.start + 15} color={a.color} />;
    })}
    {[[173, 277], [173, 295], [500, 277], [500, 295], [365, 296], [374, 311]].map(([x, y]) => (
      <circle key={`${x}-${y}`} cx={x} cy={y} r="2.500" fill="#ffff20" stroke={x === 374 || (x === 500 && y === 295) ? '#e88020' : '#000'} />
    ))}
    <circle cx="349.500" cy="329.500" r="8" fill="#fff" stroke="#c01828" />
  </svg>
);

/* ---- height profile ---- */
const heights = [0, 5, 11, 17, 23, 30, 36, 42, 48, 54, 60, 66, 72];
const BASE = 144;
const px = (i) => Math.round(4 + i * 25.2) + 0.5;
const py = (h) => BASE - h * 0.68;
const ridge = heights.map((h, i) => `L${px(i)} ${py(h)}`).join('');

const Profile = () => (
  <svg width="100%" height="170">
    <path d="M4 147.500H307" stroke="#c0c0c0" strokeWidth="2" />
    <path d={`M${px(0)} ${BASE}${ridge}L${px(12)} ${BASE}Z`} fill="#04c066" />
    <path d={`M${px(0)} ${BASE}${ridge}`} fill="none" stroke="#c02020" />
    <path d={`M4 ${BASE + 0.5}H307`} stroke="#000" />
    {heights.map((h, i) => (
      <g key={h}>
        <path d={`M${px(i)} ${py(h)}V${BASE + 3}`} stroke="#d01c24" />
        <text transform={`translate(${px(i) + 4} ${py(h) - 3}) rotate(-90)`} fontSize="10" fontFamily="Liberation Sans, sans-serif">
          {h}
        </text>
      </g>
    ))}
    <path d="M294 144.500L297 147.500L294 150.500L291 147.500Z" fill="#fff" stroke="#d01c24" />
  </svg>
);

const Spin = ({ id, value, onChange, inputRef }) => (
  <Spinner>
    <SpinnerInput id={id} ref={inputRef} value={value} onChange={(e) => onChange(e.target.value)} />
    <SpinnerButtons>
      <SpinnerButton aria-label="Aumenta">
        <svg width="7" height="4"><path d="M0 4L3.500 0L7 4Z" fill="#4d6185" /></svg>
      </SpinnerButton>
      <SpinnerButton aria-label="Diminuisci">
        <svg width="7" height="4"><path d="M0 0L3.500 4L7 0Z" fill="#4d6185" /></svg>
      </SpinnerButton>
    </SpinnerButtons>
  </Spinner>
);

const Properties = () => {
  const [quota, setQuota] = useState('0');
  const [slope, setSlope] = useState('2,72');
  const quotaRef = useRef(null);

  useEffect(() => {
    quotaRef.current.focus();
    quotaRef.current.select();
  }, []);

  return (
    <Dialog role="dialog" aria-labelledby="caption">
      <DialogTitle>
        <DialogCaption id="caption">Proprietà</DialogCaption>
        <DialogClose aria-label="Chiudi"><Cross size={14} /></DialogClose>
      </DialogTitle>
      <DialogBody>
        <Tabs role="tablist">
          <Tab role="tab" $width={86}>Opzioni generali</Tab>
          <Tab role="tab" $width={53}>Elettricità</Tab>
          <Tab role="tab" $width={62} $active aria-selected="true">Profilo 3D</Tab>
        </Tabs>
        <TabPanel>
          <Fields>
            <label htmlFor="quota">Quota (mm) :</label>
            <Spin id="quota" value={quota} onChange={setQuota} inputRef={quotaRef} />
            <PushButton $column={4} $width={73}>Applica</PushButton>
            <PushButton $column={6} $width={44} $focused>Ponte</PushButton>
            <label htmlFor="slope">Pendenza (%):</label>
            <Spin id="slope" value={slope} onChange={setSlope} />
            <PushButton $column={4} $width={73}>Calcola</PushButton>
            <PushButton $column={6} $width={44} disabled>Pilone</PushButton>
          </Fields>
          <ChartBox><Profile /></ChartBox>
          <PanelFooter>
            <PushButton $width={105}>Binario parallelo</PushButton>
            <Count>Numero di binari:  12</Count>
          </PanelFooter>
        </TabPanel>
        <DialogButtons>
          <PushButton $width={73} $focused>OK</PushButton>
          <PushButton $width={73}>Annulla</PushButton>
          <PushButton $width={73}>?</PushButton>
        </DialogButtons>
      </DialogBody>
    </Dialog>
  );
};

const trayIcons = [
  <><path d="M5 1H14V12H5Z" fill="#e8ecf4" stroke="#8090a8" /><path d="M1 6H8V15H1Z" fill="#fff" stroke="#708098" /><path d="M8 4V3L10 2L12 4L10 6V8M3 9H6V11L4 13" stroke="#204890" /></>,
  <path d="M2 1L10 2L14 7L13 15L5 13L2 8Z" fill="#f4fce0" stroke="#90c850" />,
  <><path d="M0 0H16V16H0Z" fill="#e88020" stroke="none" /><path d="M3 10H12V13H3ZM8 2L6 5L9 7L7 9M12 10H14V12" stroke="#fff" /></>,
  <><path d="M1 2H9V9H1Z" fill="#3058b0" stroke="#c8d4e8" /><path d="M3 12H9" stroke="#d0d8e8" strokeWidth="3" /><path d="M11 3Q12 5.500 11 8M13 2Q14.500 5.500 13 9M15 1Q17 5.500 15 10" stroke="#c8e8ff" /></>,
  <><path d="M2 2H9V8H2Z" fill="#284890" stroke="#a8b8d0" /><path d="M7 6H14V12H7Z" fill="#506898" stroke="#a8b8d0" /><path d="M8 8L15 15M15 8L8 15" stroke="#e02828" strokeWidth="2" /></>,
  <><path d="M8 1L14 3V9L8 15L2 9V3Z" fill="#ffe040" stroke="#b09020" /><path d="M8 4V9M8 11V13" strokeWidth="2" /></>,
  <><path d="M0 0H16V16H0Z" fill="#f0b060" stroke="none" /><circle cx="7" cy="7" r="5" fill="#f8e8c0" strokeWidth="2" /><circle cx="12" cy="12" r="3.500" fill="#30a030" stroke="#e0ffe0" /></>,
  <><path d="M1 8L6 4H15V10L10 14H1Z" fill="#c8d0c8" stroke="#788878" /><path d="M5 8L9 12L15 3" stroke="#30b040" strokeWidth="2" /></>,
  <><ellipse cx="8" cy="8" rx="5.500" ry="7.500" fill="#1838c8" stroke="#1028a0" /><path d="M5 5L11 11L8 14V2L11 5L5 11" stroke="#e02040" /></>,
  <><path d="M2 2H15V11H2Z" fill="#888c90" stroke="#606870" /><path d="M2 14H5M7 14H10M12 14H15" stroke="#606870" strokeWidth="2" /></>,
  <><circle cx="8" cy="8" r="6" stroke="#b0e4ff" strokeWidth="2" fill="#2890e0" /><path d="M9 9L14 14" stroke="#e0f4ff" strokeWidth="3" /></>,
  <><path d="M1 2H15V12H1Z" fill="#101820" stroke="#c8d4e0" /><path d="M3 8H6L8 4L10 9H13" stroke="#fff" /><path d="M4 14H12" stroke="#d8d8d8" strokeWidth="2" /></>,
  <><circle cx="7" cy="7" r="5" fill="#989898" stroke="#585858" /><circle cx="7" cy="7" r="2" fill="#e0e0e0" stroke="#404040" /><path d="M13 9L15 12L13 15" stroke="#b0c8e0" /></>,
  <><path d="M4 4L9 2L14 10L8 14Z" fill="#586068" stroke="#303840" /><path d="M2 3H9V7H5V10L1 7Z" fill="#38c040" stroke="#108020" /></>,
  <><path d="M2 1L3 8L7 12H13" stroke="#303840" strokeWidth="4" /><path d="M2 1L3 8L7 12H12" stroke="#e8ecf0" strokeWidth="2" /><path d="M10 11H15V15H10Z" fill="#d0a850" stroke="#604010" /></>,
];

const App = () => {
  const [selected, setSelected] = useState('Ro42423');

  return (
    <AppStyle>
      <GlobalStyle />
      <TitleBar>
        <Logo />
        <TitleText>{'WinTrack  V11.0 - [track1]'}</TitleText>
        <WindowButtons>
          <WindowButton aria-label="Riduci a icona">
            <Svg><path d="M3 12.500H9" stroke="#fff" strokeWidth="3" /></Svg>
          </WindowButton>
          <WindowButton aria-label="Ripristina">
            <Svg><path d="M3.500 7.500H9.500V13.500H3.500ZM3 7.500H10M6.500 5V3.500H12.500V10.500H11M6 3.500H13" stroke="#fff" /></Svg>
          </WindowButton>
          <WindowButton $close aria-label="Chiudi"><Cross size={15} /></WindowButton>
        </WindowButtons>
      </TitleBar>
      <MenuBar>
        <Svg>
          <path d="M0 0H16V16H0Z" fill="#fff" stroke="none" />
          <path d="M0 1H14V4H1ZM0 9L4 6H12L10 8Z" fill="#60a080" stroke="#207050" />
          <path d="M1 6L7 5L15 8V11L9 15L3 12L9 9L13 11M2 13L6 15M5 10L9 12" stroke="#404848" />
        </Svg>
        <MenuList>
          {['File', 'Modifica', 'Visualizza', 'Inserisci', 'Extra', 'Moduli', 'Opzioni', 'Finestra', '?'].map((name) => (
            <MenuItem key={name}>{name}</MenuItem>
          ))}
        </MenuList>
        <MdiButtons>
          <MdiButton aria-label="Riduci"><Svg size={14}><path d="M4 12.500H9" stroke="#c8c5b6" strokeWidth="2" /></Svg></MdiButton>
          <MdiButton aria-label="Ripristina"><Svg size={14}><path d="M3 7H10V13H3ZM6 5V3H13V10H11" stroke="#c8c5b6" /></Svg></MdiButton>
          <MdiButton aria-label="Chiudi"><Cross color="#c8c5b6" size={11} /></MdiButton>
        </MdiButtons>
      </MenuBar>
      <ToolBar role="toolbar">
        <ToolGroup>
          {toolBar.map((name, i) =>
            name === '|' ? (
              <Separator key={i} />
            ) : (
              <ToolButton key={i} aria-label={name} $pressed={name === 'curve'}>
                <Svg>{tools[name]}</Svg>
              </ToolButton>
            )
          )}
        </ToolGroup>
      </ToolBar>
      <Body>
        <Palette>
          <PaletteTitle>
            FSB (Finestra...
            <PaletteClose aria-label="Chiudi"><Cross size={9} /></PaletteClose>
          </PaletteTitle>
          <PaletteBody>
            <Combo>
              <ComboSelect aria-label="Sistema di binari">
                <option>RocoLine H0 senza massicciata</option>
              </ComboSelect>
              <ComboArrow><Chevron /></ComboArrow>
            </Combo>
            <PaletteTools>
              {paletteTools.map((icon, i) => (
                <PaletteTool key={i} aria-label={`Strumento ${i + 1}`}><Svg>{icon}</Svg></PaletteTool>
              ))}
              <PaletteTool><Label3D>3D</Label3D></PaletteTool>
            </PaletteTools>
            <Preview>
              <PreviewName>{selected}</PreviewName>
              <svg width="88" height="40" fill="none" stroke="#000">
                <path d="M7.500 9V14.500Q48 15 87 33" />
              </svg>
            </Preview>
            <Description>Binario curvo R3, raggio 419.6 mm, 30°</Description>
            <ListBox>
              <TrackList role="listbox" aria-label="Binari">
                {names.map((name, i) => (
                  <TrackItem key={name} role="option" aria-selected={name === selected} onClick={() => setSelected(name)}>
                    <TrackIcon index={i} />
                    <TrackName $selected={name === selected} $used={name === 'Ro42410' || name === 'Ro42424'}>{name}</TrackName>
                  </TrackItem>
                ))}
              </TrackList>
              <ScrollBar $vertical>
                <ScrollButton aria-label="Su"><Chevron to="up" /></ScrollButton>
                <ScrollThumb $vertical $size={9} />
                <ScrollSpace $grow={1} />
                <ScrollButton aria-label="Giù"><Chevron /></ScrollButton>
              </ScrollBar>
            </ListBox>
          </PaletteBody>
        </Palette>
        <Main>
          <PlanRow>
            <Plan>
              <TrackPlan />
              <Properties />
            </Plan>
            <ScrollBar $vertical>
              <ScrollButton aria-label="Su"><Chevron to="up" /></ScrollButton>
              <ScrollSpace $grow={1} />
              <ScrollThumb $vertical $size={22}>
                <svg width="7" height="8" stroke="#eef3ff"><path d="M0 0.500H7M0 2.500H7M0 4.500H7M0 6.500H7" /></svg>
              </ScrollThumb>
              <ScrollSpace $grow={1} />
              <ScrollButton aria-label="Giù"><Chevron /></ScrollButton>
            </ScrollBar>
          </PlanRow>
          <HorizontalRow>
            <ScrollBar>
              <ScrollSpace $grow={543} />
              <ScrollThumb $size={123}>
                <svg width="8" height="7" stroke="#eef3ff"><path d="M0.500 0V7M2.500 0V7M4.500 0V7M6.500 0V7" /></svg>
              </ScrollThumb>
              <ScrollSpace $grow={558} />
              <ScrollButton aria-label="Destra"><Chevron to="right" /></ScrollButton>
            </ScrollBar>
          </HorizontalRow>
          <LevelBar>
            <LevelTools>
              {Array.from({ length: 30 }, (_, i) => (
                <LevelButton key={i}>
                  <LevelFace>
                    {i + 1}
                    {i === 9 && <ActiveMark />}
                  </LevelFace>
                </LevelButton>
              ))}
              <Separator />
              <ToolButton $pressed aria-label="Tutti i livelli">
                <Svg>
                  <path d="M1 14L4 11H15L12 14Z" fill="#1010d0" />
                  <path d="M1 11L4 8H15L12 11Z" fill="#f8f000" />
                  <path d="M1 8L4 5H15L12 8Z" fill="#e01020" />
                  <path d="M1 5L4 2H15L12 5Z" fill="#008030" />
                </Svg>
              </ToolButton>
              <ToolButton aria-label="Livello attivo">
                <Svg>
                  <path d="M1 14L4 11H14L11 14ZM3 5L6 2H15L12 5Z" stroke={GREY} />
                  <path d="M0 9L4 6H15L11 9Z" fill="#f01018" stroke="#b01018" />
                </Svg>
              </ToolButton>
              <ToolButton aria-label="Sposta livello">
                <Svg>
                  <path d="M3 5L6 1H15L12 5Z" fill={GREY} stroke={GREY} />
                  <path d="M1 14L4 11H15L12 14ZM8 6V10M6 8H10" stroke={GREY} />
                </Svg>
              </ToolButton>
              <Separator />
              <ToolButton aria-label="Gestione livelli">
                <Svg>
                  <path d="M1 12L4 9H15L12 12Z" fill="#fff" />
                  <path d="M1 9L4 6H15L12 9Z" fill="#f8f000" />
                  <path d="M2 5L5 2H15L12 5Z" fill="#20e0f0" />
                  <path d="M11 8H14V11L12 13V15" stroke="#0000a0" strokeWidth="2" />
                </Svg>
              </ToolButton>
              <Separator />
              {[1, 2, 3, 4, 5].map((n) => (
                <ToolButton key={n}><GroupFace>{n}</GroupFace></ToolButton>
              ))}
            </LevelTools>
          </LevelBar>
          <StatusBar>
            <StatusText>a Guida</StatusText>
            <StatusCell $width={278}>Ro42423/220mm/Livello 10</StatusCell>
            <StatusCell $width={68} $indent={6}>{'<- 54 ->'}</StatusCell>
            <StatusCell $width={46}>+00614</StatusCell>
            <StatusCell $width={45}>-00134</StatusCell>
          </StatusBar>
        </Main>
      </Body>
      <TaskBar>
        <StartButton>
          <svg width="18" height="18" viewBox="0 0 18 18">
            <path d="M2 2Q5 0 8 2L7 8Q4 6 1 8Z" fill="#f05a28" />
            <path d="M9 2.500Q13 5 17 3L16 9Q12 10 8 8.500Z" fill="#7cc83c" />
            <path d="M1 9Q4 7.500 7 9L6 15Q3 13 0 15Z" fill="#5080f0" />
            <path d="M8 9.500Q12 11 16 10L15 16Q11 17 7 15.500Z" fill="#fcc830" />
          </svg>
          start
        </StartButton>
        <Grip />
        <QuickLaunch><Chrome /></QuickLaunch>
        <Grip />
        <TaskButton><Chrome />Scala TT - il forum sull...</TaskButton>
        <TaskButton $active><Logo />{'WinTrack  V11.0 - [tr...'}</TaskButton>
        <Tray>
          {trayIcons.map((icon, i) => (
            <svg key={i} width="16" height="16" viewBox="0 0 16 16" fill="none" stroke="#000">{icon}</svg>
          ))}
          <Clock>19.19</Clock>
        </Tray>
      </TaskBar>
    </AppStyle>
  );
};

export default App;
